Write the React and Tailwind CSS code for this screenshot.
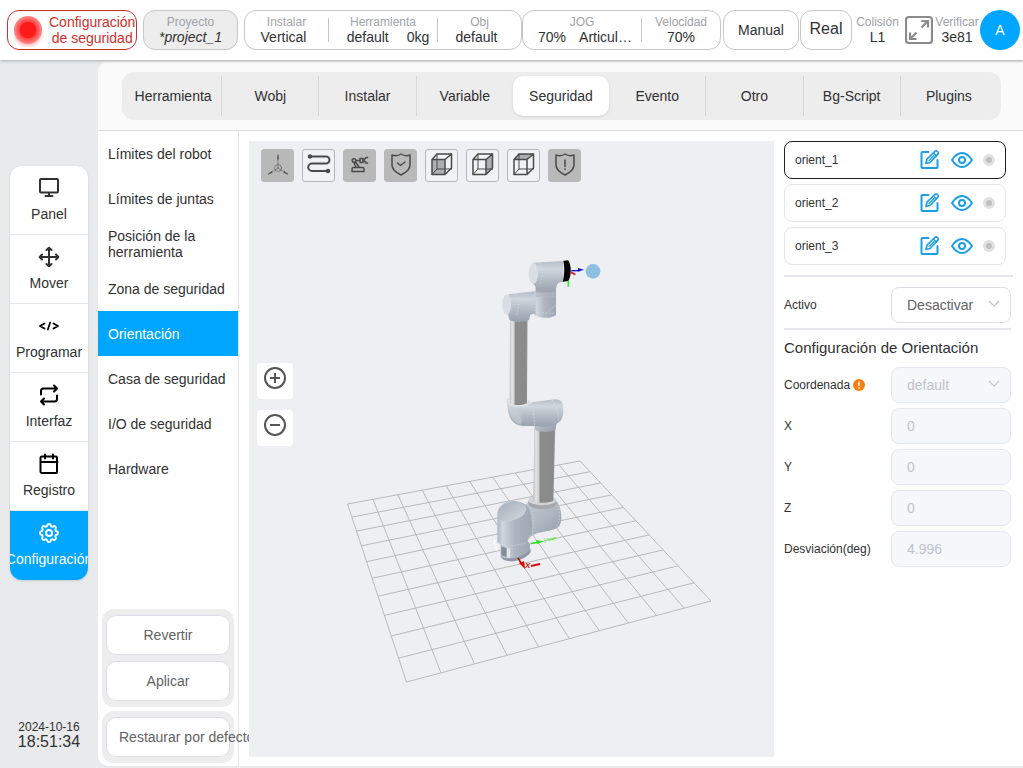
import { useState } from "react";
import { TbSettings } from "react-icons/tb";

const tabs = [
  "Herramienta",
  "Wobj",
  "Instalar",
  "Variable",
  "Seguridad",
  "Evento",
  "Otro",
  "Bg-Script",
  "Plugins",
];

const menuItems = [
  "Límites del robot",
  "Límites de juntas",
  "Posición de la herramienta",
  "Zona de seguridad",
  "Orientación",
  "Casa de seguridad",
  "I/O de seguridad",
  "Hardware",
];

const NavIcon = ({ name }) => {
  if (name === "Configuración") return <TbSettings size={24} />;
  return (
    <svg
      width="24"
      height="24"
      viewBox="0 0 24 24"
      fill="none"
      stroke="currentColor"
      strokeWidth="2"
      strokeLinecap="round"
      strokeLinejoin="round"
    >
      {name === "Panel" && (
        <path d="M4 3h16a1 1 0 0 1 1 1v11.500a1 1 0 0 1-1 1H4a1 1 0 0 1-1-1V4a1 1 0 0 1 1-1zM12 16.500V20M8.500 20h7" />
      )}
      {name === "Mover" && (
        <path d="M12 3v18M3 12h18M9.500 5 12 2.700 14.500 5M9.500 19l2.500 2.300 2.500-2.300M5 9.500 2.700 12 5 14.500M19 9.500l2.300 2.500-2.300 2.500" />
      )}
      {name === "Programar" && (
        <path
          strokeWidth="1.800"
          d="M7.500 9.500 3 12l4.500 2.500M16.500 9.500 21 12l-4.500 2.500M13.200 8.500l-2.400 7"
        />
      )}
      {name === "Interfaz" && (
        <path d="M17 2.500 20 5.500 17 8.500M4 11.500V8a2.500 2.500 0 0 1 2.500-2.500H20M7 21.500 4 18.500 7 15.500M20 12.500V16a2.500 2.500 0 0 1-2.500 2.500H4" />
      )}
      {name === "Registro" && (
        <path d="M5 4.500h14a1 1 0 0 1 1 1v14.500a1 1 0 0 1-1 1H5a1.500 1.500 0 0 1-1.500-1V6A1.500 1.500 0 0 1 5 4.500zM3.500 10h17M8 2.500v4M16 2.500v4" />
      )}
    </svg>
  );
};

const navItems = [
  { name: "Panel", color: "text-[#303133]" },
  { name: "Mover", color: "text-[#303133]" },
  { name: "Programar", color: "text-black" },
  { name: "Interfaz", color: "text-black" },
  { name: "Registro", color: "text-black" },
  { name: "Configuración", color: "text-white" },
];

const Stat = ({ label, children, className = "" }) => (
  <div className={`flex flex-col items-center leading-[15px] ${className}`}>
    <span className="text-xs leading-[15px] text-[#a0a3a8]">{label}</span>
    <span className="text-sm leading-[15px] whitespace-nowrap">{children}</span>
  </div>
);

const Divider = () => <div className="w-px h-6 bg-[#c4c6ca]" />;

const Header = () => (
  <header className="relative z-10 flex items-center h-15 shrink-0 bg-white pl-[7px] pr-[3px] shadow-[0_1px_3px_rgba(0,0,0,0.25)]">
    <button className="flex items-center w-[130px] h-10 shrink-0 border border-[#c9302c] rounded-xl pl-1.5 gap-[5px] mr-1.5 text-sm leading-4 text-[#d12f2c]">
      <svg width="30" height="34" viewBox="0 0 30 34" className="shrink-0">
        <defs>
          <radialGradient id="lamp">
            <stop offset="0.55" stopColor="#ff1a1a" />
            <stop offset="0.62" stopColor="#ff4545" />
            <stop offset="1" stopColor="#ff8a8a" />
          </radialGradient>
          <radialGradient id="glow">
            <stop offset="0.6" stopColor="#ff8080" stopOpacity="0.6" />
            <stop offset="1" stopColor="#ff8080" stopOpacity="0" />
          </radialGradient>
        </defs>
        <circle cx="14" cy="20" r="16" fill="url(#glow)" />
        <circle cx="14" cy="17" r="14" fill="url(#lamp)" />
      </svg>
      <span className="shrink-0">
        Configuración
        <br />
        de seguridad
      </span>
    </button>

    <button className="w-[95px] h-10 shrink-0 border border-[#c4c6ca] rounded-xl bg-[#ededed] mr-1.5">
      <Stat label="Proyecto">
        <i>*project_1</i>
      </Stat>
    </button>

    <div className="flex items-center flex-1 h-10 border border-[#c4c6ca] rounded-xl">
      <Stat label="Instalar" className="w-[83px]">
        <span className="pr-1.5">Vertical</span>
      </Stat>
      <Divider />
      <Stat label="Herramienta" className="w-[108px]">
        <span className="flex gap-[18px] pl-2.5">
          <span>default</span>
          <span>0kg</span>
        </span>
      </Stat>
      <Divider />
      <Stat label="Obj" className="flex-1">
        <span className="pr-1.5">default</span>
      </Stat>
    </div>

    <div className="flex items-center w-[199px] h-10 shrink-0 border border-[#c4c6ca] rounded-xl mr-0.5">
      <Stat label="JOG" className="w-[118px]">
        <span className="flex gap-[13px] pl-1.5">
          <span>70%</span>
          <span>Articul…</span>
        </span>
      </Stat>
      <Divider />
      <Stat label="Velocidad" className="flex-1">
        70%
      </Stat>
    </div>

    <button className="w-[76px] h-10 shrink-0 border border-[#c4c6ca] rounded-xl mr-px text-sm">
      Manual
    </button>
    <button className="w-[52px] h-10 shrink-0 border border-[#c4c6ca] rounded-xl pb-0.5 text-base leading-4">
      Real
    </button>
    <Stat label="Colisión" className="w-[51px] shrink-0">
      L1
    </Stat>
    <button aria-label="Pantalla completa" className="shrink-0 mx-0.5">
      <svg
        width="28"
        height="28"
        viewBox="0 0 28 28"
        fill="none"
        stroke="#8b8b8b"
        strokeWidth="2.200"
      >
        <rect x="1" y="1" width="26" height="26" rx="3" />
        <path d="M16.500 5H23v6.500M23 5l-6.500 6.500M11.500 23H5v-6.500M5 23l6.500-6.500" />
      </svg>
    </button>
    <Stat label="Verificar" className="w-11 shrink-0 mr-px">
      3e81
    </Stat>
    <button className="size-10 shrink-0 rounded-full bg-[#00a6ff] text-white text-sm">
      A
    </button>
  </header>
);

const Tool = ({ label, active, children }) => (
  <button
    aria-label={label}
    className={`size-[33px] rounded-[3px] border ${
      active ? "bg-[#b9b9b9] border-[#b9b9b9]" : "border-[#b5b6b9] bg-[#f1f2f5]"
    }`}
  >
    <svg
      width="31"
      height="31"
      viewBox="1 1 31 31"
      fill="none"
      stroke="#4a4a4a"
      strokeWidth="1.500"
      strokeLinecap="round"
      strokeLinejoin="round"
    >
      {children}
    </svg>
  </button>
);

const Cube = ({ face }) => (
  <>
    <path d={face} fill="#adaeb0" stroke="none" />
    <path d="M7 10.500h13v15H7zM7 10.500 12 5h14.500v14L20 25.500M20 10.500 26.500 5" />
    <path strokeWidth="1" d="M12 5v15h14.500M12 20l-5 5.500" />
  </>
);

const shield = "M17 5c3 2 6 2 9 1v10c0 5-4 7.500-9 10-5-2.500-9-5-9-10V6c3 1 6 1 9-1z";

const Toolbar = () => (
  <div className="relative flex gap-2 pt-2 pl-3">
    <Tool label="Ejes" active>
      <g strokeWidth="0.500">
        <circle cx="17" cy="19" r="3.500" />
        <path d="M17 19V7M17 19 8 24.500M17 19l9 5.500" />
        <path fill="#4a4a4a" d="M16.600 10 17 5.500l.4 4.500zM10.500 22.600l-3.500 2.700 4-1.500zM23.500 22.600l3.500 2.700-4-1.500z" />
      </g>
    </Tool>
    <Tool label="Trayectoria">
      <path
        strokeWidth="2"
        d="M8 7.500h16a3.500 3.500 0 0 1 0 7H10a3.700 3.700 0 0 0 0 7.500h16"
      />
      <circle cx="8" cy="7.500" r="1.500" fill="#4a4a4a" />
      <circle cx="26" cy="22" r="1.500" fill="#4a4a4a" />
    </Tool>
    <Tool label="Robot" active>
      <path d="M10.500 18.500h9a1.500 1.500 0 0 1 1.500 1.500v2.500H9V20a1.500 1.500 0 0 1 1.500-1.500zM11 13.500l2 5M12.500 13l4 5.500M13 11.500h4" />
      <circle cx="11" cy="11.500" r="1.800" />
      <path d="M17 9.500h3v4h-3zM24.500 8.500H23L21 11l2 3h1.500" />
    </Tool>
    <Tool label="Seguridad" active>
      <path d={shield} />
      <path d="M13.500 14l3 2.500 4.500-3.500" />
    </Tool>
    <Tool label="Vista frontal">
      <Cube face="M7 10.500h13v15H7z" />
    </Tool>
    <Tool label="Vista lateral">
      <Cube face="M20 10.500 26.500 5v14L20 25.500z" />
    </Tool>
    <Tool label="Vista superior">
      <Cube face="M7 10.500 12 5h14.500L20 10.500z" />
    </Tool>
    <Tool label="Alerta" active>
      <path d={shield} />
      <path d="M17 11v6.500M17 20v.5" />
    </Tool>
  </div>
);

// floor corners: back-left, back-right, front-right, front-left
const floor = [
  [347.5, 504],
  [580, 461],
  [711, 601],
  [406.5, 682],
];

// maps u, v in 0..1 onto the floor with perspective
const project = (u, v) => {
  const [[x0, y0], [x1, y1], [x2, y2], [x3, y3]] = floor;
  const dx1 = x1 - x2;
  const dx2 = x3 - x2;
  const sx = x0 - x1 + x2 - x3;
  const dy1 = y1 - y2;
  const dy2 = y3 - y2;
  const sy = y0 - y1 + y2 - y3;
  const det = dx1 * dy2 - dx2 * dy1;
  const g = (sx * dy2 - dx2 * sy) / det;
  const h = (dx1 * sy - sx * dy1) / det;
  const w = g * u + h * v + 1;
  const x = ((x1 - x0 + g * x1) * u + (x3 - x0 + h * x3) * v + x0) / w;
  const y = ((y1 - y0 + g * y1) * u + (y3 - y0 + h * y3) * v + y0) / w;
  return `${x.toFixed(1)} ${y.toFixed(1)}`;
};

const gridPath = Array.from({ length: 11 }, (_, i) => {
  const t = i / 10;
  return `M${project(t, 0)}L${project(t, 1)}M${project(0, t)}L${project(1, t)}`;
}).join("");

const Scene = () => (
  <svg viewBox="249 141 525 616" className="absolute inset-0 size-full">
    <defs>
      <linearGradient id="pipeH" x1="0" y1="0" x2="0" y2="1">
        <stop offset="0" stopColor="#b4bcc6" />
        <stop offset="0.25" stopColor="#d0d6dd" />
        <stop offset="0.6" stopColor="#b3bbc5" />
        <stop offset="1" stopColor="#98a1ac" />
      </linearGradient>
      <linearGradient id="pipeV" x1="0" y1="0" x2="1" y2="0">
        <stop offset="0" stopColor="#adb5c0" />
        <stop offset="0.15" stopColor="#d0d6dd" />
        <stop offset="0.5" stopColor="#adb5c0" />
        <stop offset="1" stopColor="#9ea7b2" />
      </linearGradient>
      <linearGradient id="shoulder" x1="0" y1="0" x2="1" y2="1">
        <stop offset="0" stopColor="#c6cdd5" />
        <stop offset="0.5" stopColor="#afb7c1" />
        <stop offset="1" stopColor="#8e98a4" />
      </linearGradient>
      <linearGradient id="tube" x1="0" y1="0" x2="1" y2="0">
        <stop offset="0" stopColor="#b9b9b9" />
        <stop offset="0.12" stopColor="#e6e6e6" />
        <stop offset="0.25" stopColor="#d0d0d0" />
        <stop offset="0.3" stopColor="#8c8c8c" />
        <stop offset="0.92" stopColor="#8a8a8a" />
        <stop offset="1" stopColor="#a8a8a8" />
      </linearGradient>
      <linearGradient id="cap" x1="0" y1="0" x2="1" y2="1">
        <stop offset="0" stopColor="#a4adb8" />
        <stop offset="1" stopColor="#d5dbe2" />
      </linearGradient>
    </defs>

    <path d={gridPath} stroke="#b8b9bb" fill="none" />

    {/* base and shoulder */}
    <g transform="translate(480 390) scale(0.3333)">
      <path d="M62 450v52c10 16 60 10 88-22v-16c-6-14-20-24-34-24z" fill="url(#pipeV)" />
      <path d="M66 500c24 10 62 4 86-24v10c-18 28-66 34-84 22z" fill="#8f99a5" />
      <path d="M64 470l18 4v28l-18-6z" fill="#848e9a" />
      <path d="M80 474l10 2v28l-10-2z" fill="#e3e7eb" />
      <path d="M130 346l18-10h84c14 22 16 56 6 72-10 12-30 14-60 20-20 4-34 14-38 32l-30-10z" fill="url(#shoulder)" />
      <path d="M52 375c0-28 22-42 48-42 28 0 46 14 50 34 6 24 8 44 4 60-8 12-14 18-12 34-20 14-66 16-90-4z" fill="url(#pipeV)" />
      <path d="M55 380c-4-28 18-44 46-45 24 0 38 10 38 22-4 26-36 36-60 36-14 0-22-4-24-13z" fill="url(#cap)" />
      <path d="M54 458c20 12 60 12 86-2M155 350q8 40 2 84M234 345q10 30-2 64" stroke="#cdd4dc" strokeWidth="2" fill="none" strokeDasharray="6 4" />
      <path d="M145 333v10c12 20 72 20 84-2v-10z" fill="#a5a8ab" />
      <ellipse cx="187" cy="331" rx="42" ry="15" fill="#d2d4d6" />
      <path d="M163 110h63l-6 222c-16 8-48 8-60 0z" fill="url(#tube)" />
      <path d="M45 450l-2 12M48 462l2 20" stroke="#fff" strokeWidth="4" />
    </g>

    {/* forearm, elbow and wrist */}
    <g transform="translate(480 250) scale(0.3333)">
      <path d="M90 200h53l-2 260c-14 8-40 8-52 0z" fill="url(#tube)" />
      <path d="M160 500h74l-8 40c-16 8-46 8-60 0z" fill="url(#shoulder)" />
      <path d="M82 460c0 40 14 68 52 68h40c20 6 44 4 58-8 14-6 18-20 18-42 0-22-8-30-24-30l-68 8-8 6c-16 14-54 10-68-2z" fill="url(#pipeH)" />
      <path d="M86 472c4 28 16 48 36 52 10-20-6-44-12-50z" fill="#c8cfd7" opacity="0.6" />
      <path d="M80 450c2-5 6-6 9-4v14c8 10 42 10 53 0v-12l10 6c2 22-72 24-72 2z" fill="#dadde2" />
      <path d="M216 450q22 34 20 68M160 480l4 48" stroke="#d8dee5" strokeWidth="2" fill="none" strokeDasharray="6 4" />
      <path d="M168 90h60v104c-10 12-50 12-64 2l-4-16z" fill="url(#pipeV)" />
      <path d="M85 133l80-9 2 66-16 4-4 16c-14 8-44 8-58 0l-4-12z" fill="url(#pipeH)" />
      <ellipse cx="80" cy="164" rx="13" ry="31" fill="#d9dee4" />
      <path d="M160 38l90-5v62l-14 3c-8 8-8 20-9 30h-59c0-12 2-18-8-25z" fill="url(#pipeH)" />
      <path d="M168 120c16 8 44 8 59 2v20h-59z" fill="#aeb6c1" opacity="0.6" />
      <ellipse cx="160" cy="70" rx="14" ry="32" fill="#d9dee4" />
      <path d="M108 132q16 32 0 66M165 130v58l60 2M180 37q14 34 0 66M226 165l-30 30" stroke="#dfe4ea" strokeWidth="1.500" fill="none" strokeDasharray="5 5" />
      <path d="M250 32l15-1c10 16 10 46 0 62l-17 2c6-18 6-46 2-63z" fill="#050505" />
      <path d="M274 62h24" stroke="#1414c8" strokeWidth="4" />
      <path d="M294 54l18 5-18 6z" fill="#1414c8" />
      <path d="M272 66l14 8" stroke="#e02020" strokeWidth="6" />
      <path d="M265 92v18" stroke="#35e035" strokeWidth="5" />
      <circle cx="339" cy="64" r="22" fill="#8dbfe0" />
    </g>

    {/* world axes */}
    <path d="M518 558l3 5" stroke="#e00000" strokeWidth="1.500" />
    <path d="M519 563l5-2 1 8z" fill="#e00000" />
    <path d="M531 566l9-2" stroke="#e00000" strokeWidth="2" />
    <text x="525" y="568" fontSize="8" fontWeight="bold" fontStyle="italic" fill="#e00000">X</text>
    <path d="M531 543.500l6-1" stroke="#2ee01e" strokeWidth="1.500" />
    <path d="M536 540l8 1.500-7 2.500z" fill="#2ee01e" />
    <path d="M548 540l8-2" stroke="#7be35e" strokeWidth="2" />
    <text x="543" y="543" fontSize="7" fontStyle="italic" fill="#7be35e">Y</text>
  </svg>
);

const ZoomButton = ({ label, d }) => (
  <button
    aria-label={label}
    className="flex items-center justify-center size-9 rounded bg-white pb-1.5"
  >
    <svg width="24" height="24" viewBox="0 0 24 24" fill="none" stroke="#555" strokeWidth="2">
      <circle cx="12" cy="12" r="10" />
      <path d={d} />
    </svg>
  </button>
);

const OrientRow = ({ name, selected, onSelect }) => (
  <div
    onClick={onSelect}
    className={`flex items-center h-[38px] mr-[7px] pl-2.5 pr-2.5 border rounded-lg text-xs ${
      selected ? "border-[#222]" : "border-[#e3e5e9]"
    }`}
  >
    <span className="flex-1">{name}</span>
    <button aria-label={`Editar ${name}`} className="mr-2.5">
      <svg width="22" height="22" viewBox="0 0 22 22" fill="none" stroke="#1a9fe6" strokeWidth="2" strokeLinejoin="round" strokeLinecap="round">
        <path d="M9.500 3h-6a1 1 0 0 0-1 1v14a1 1 0 0 0 1 1h14a1 1 0 0 0 1-1v-7" />
        <path strokeWidth="1.700" d="M7 14.500l1-4.500 8-7.700a1.500 1.500 0 0 1 2.200 0l.7.700a1.500 1.500 0 0 1 0 2.200l-7.900 8.300z" />
        <path d="M15 4.500l2.500 2.500M10 11.500l5-5" strokeWidth="1.200" />
      </svg>
    </button>
    <button aria-label={`Ver ${name}`} className="mr-2.5">
      <svg width="22" height="16" viewBox="0 0 22 16" fill="none" stroke="#1a9fe6" strokeWidth="2">
        <path d="M1 8c3-4.500 6-7 10-7s7 2.500 10 7c-3 4.500-6 7-10 7s-7-2.500-10-7z" />
        <circle cx="11" cy="8" r="3" />
      </svg>
    </button>
    <span className="size-3 rounded-full border-[3px] border-[#e0e0e0] bg-[#bfbfbf]" />
  </div>
);

const Row = ({ id, label, hint, children }) => (
  <div className="flex items-center justify-between h-9">
    <label htmlFor={id} className="flex items-center gap-[3px] text-xs">
      {label}
      {hint && (
        <svg width="12" height="12" viewBox="0 0 12 12">
          <circle cx="6" cy="6" r="6" fill="#ff7f0e" />
          <path d="M6 2.500v4.500M6 8.300v1.400" stroke="#fff" strokeWidth="1.500" />
        </svg>
      )}
    </label>
    {children}
  </div>
);

const Select = ({ id, value, disabled }) => (
  <div className="relative w-30 h-9">
    <select
      id={id}
      disabled={disabled}
      className="appearance-none size-full border border-[#dcdfe6] rounded-lg pl-[15px] text-sm text-[#606266] disabled:bg-[#f5f7fa] disabled:text-[#c0c4cc] disabled:border-[#e4e7ed] disabled:opacity-100"
    >
      <option>{value}</option>
    </select>
    <svg
      width="12"
      height="8"
      viewBox="0 0 12 8"
      fill="none"
      stroke="#c0c4cc"
      strokeWidth="1.200"
      className="absolute right-[11px] top-[13px] pointer-events-none"
    >
      <path d="M1 1l5 5 5-5" />
    </svg>
  </div>
);

const fields = [
  { id: "x", label: "X", value: "0" },
  { id: "y", label: "Y", value: "0" },
  { id: "z", label: "Z", value: "0" },
  { id: "deviation", label: "Desviación(deg)", value: "4.996" },
];

const actionButton =
  "h-10 w-full rounded-[10px] border border-[#dcdfe6] bg-white px-3 text-sm text-[#606266] whitespace-nowrap";

const App = () => {
  const [orient, setOrient] = useState("orient_1");

  return (
    <div className="flex flex-col h-screen overflow-hidden bg-[#e9eaec] text-[#303133] font-['Liberation_Sans',Arial,sans-serif]">
      <Header />

      <div className="flex flex-1 min-h-0">
        <aside className="flex flex-col w-[98px] shrink-0 px-2.5 pt-[106px]">
          <nav className="rounded-xl bg-white overflow-hidden shadow-sm divide-y divide-[#e6e7e9]">
            {navItems.map(({ name, color }) => (
              <a
                key={name}
                href="#"
                className={`flex flex-col items-center h-[69px] pt-2.5 text-sm ${
                  name === "Configuración" ? "bg-[#00a6ff] text-white" : ""
                }`}
              >
                <span className={color}>
                  <NavIcon name={name} />
                </span>
                <span className="mt-1">{name}</span>
              </a>
            ))}
          </nav>
          <div className="mt-auto pb-[18px] text-center">
            <p className="text-xs leading-[14px]">2024-10-16</p>
            <p className="text-base leading-4">18:51:34</p>
          </div>
        </aside>

        <main className="flex flex-col flex-1 min-w-0 mt-0.5 mb-0.5 bg-white rounded-l-[10px]">
          <div className="pl-6 pr-[22px] py-2.5 bg-[#fafafa] border-b border-[#dcdddf] rounded-tl-[10px]">
            <div className="flex h-12 p-1 pl-[3px] rounded-xl bg-[#ededed]">
              {tabs.map((tab, i) => (
                <button
                  key={tab}
                  className={`flex-1 basis-0 text-sm ${
                    tab === "Seguridad"
                      ? "bg-white rounded-[10px] shadow-sm"
                      : i !== 3 && i !== 8
                        ? "border-r border-[#d6d7d9]"
                        : ""
                  }`}
                >
                  {tab}
                </button>
              ))}
            </div>
          </div>

          <div className="flex flex-1 min-h-0">
            <div className="flex flex-col w-[141px] shrink-0 border-r border-[#e6e7e9]">
              {menuItems.map((item) => (
                <a
                  key={item}
                  href="#"
                  className={`flex items-center h-[45px] shrink-0 px-2.5 text-sm leading-4 ${
                    item === "Orientación" ? "bg-[#00a6ff] text-white" : ""
                  }`}
                >
                  {item}
                </a>
              ))}
              <div className="flex flex-col gap-1 mt-auto px-1 pb-[3px]">
                <div className="flex flex-col gap-1.5 px-1 py-1.5 rounded-xl bg-[#ededed]">
                  <button className={actionButton}>Revertir</button>
                  <button className={actionButton}>Aplicar</button>
                </div>
                <div className="px-1 py-1.5 rounded-xl bg-[#ededed]">
                  <button className={`${actionButton} text-left`}>
                    Restaurar por defecto
                  </button>
                </div>
              </div>
            </div>

            <section className="relative flex-1 min-w-0 ml-2.5 mt-2.5 mb-[9px] bg-[#eeeff3]">
              <Scene />
              <Toolbar />
              <div className="relative flex flex-col gap-[11px] w-9 ml-2 mt-[181px]">
                <ZoomButton label="Acercar" d="M7 12h10M12 7v10" />
                <ZoomButton label="Alejar" d="M7 12h10" />
              </div>
            </section>

            <aside className="w-[249px] shrink-0 pt-2.5 pl-2.5 pr-2.5">
              <div className="flex flex-col gap-[5px]">
                {["orient_1", "orient_2", "orient_3"].map((name) => (
                  <OrientRow
                    key={name}
                    name={name}
                    selected={orient === name}
                    onSelect={() => setOrient(name)}
                  />
                ))}
              </div>
              <div className="h-0.5 my-2.5 bg-[#e4e6ea]" />
              <div className="mr-0.5">
                <Row id="active" label="Activo">
                  <Select id="active" value="Desactivar" />
                </Row>
                <div className="h-0.5 mt-[5px] bg-[#e4e6ea]" />
                <h2 className="text-[15px] leading-9 mb-px">
                  Configuración de Orientación
                </h2>
                <div className="flex flex-col gap-[5px]">
                  <Row id="coord" label="Coordenada" hint>
                    <Select id="coord" value="default" disabled />
                  </Row>
                  {fields.map(({ id, label, value }) => (
                    <Row key={id} id={id} label={label}>
                      <input
                        id={id}
                        defaultValue={value}
                        disabled
                        className="w-30 h-9 border border-[#e4e7ed] rounded-lg bg-[#f5f7fa] px-[15px] text-sm text-[#c0c4cc]"
                      />
                    </Row>
                  ))}
                </div>
              </div>
            </aside>
          </div>
        </main>
      </div>
    </div>
  );
};

export default App;
